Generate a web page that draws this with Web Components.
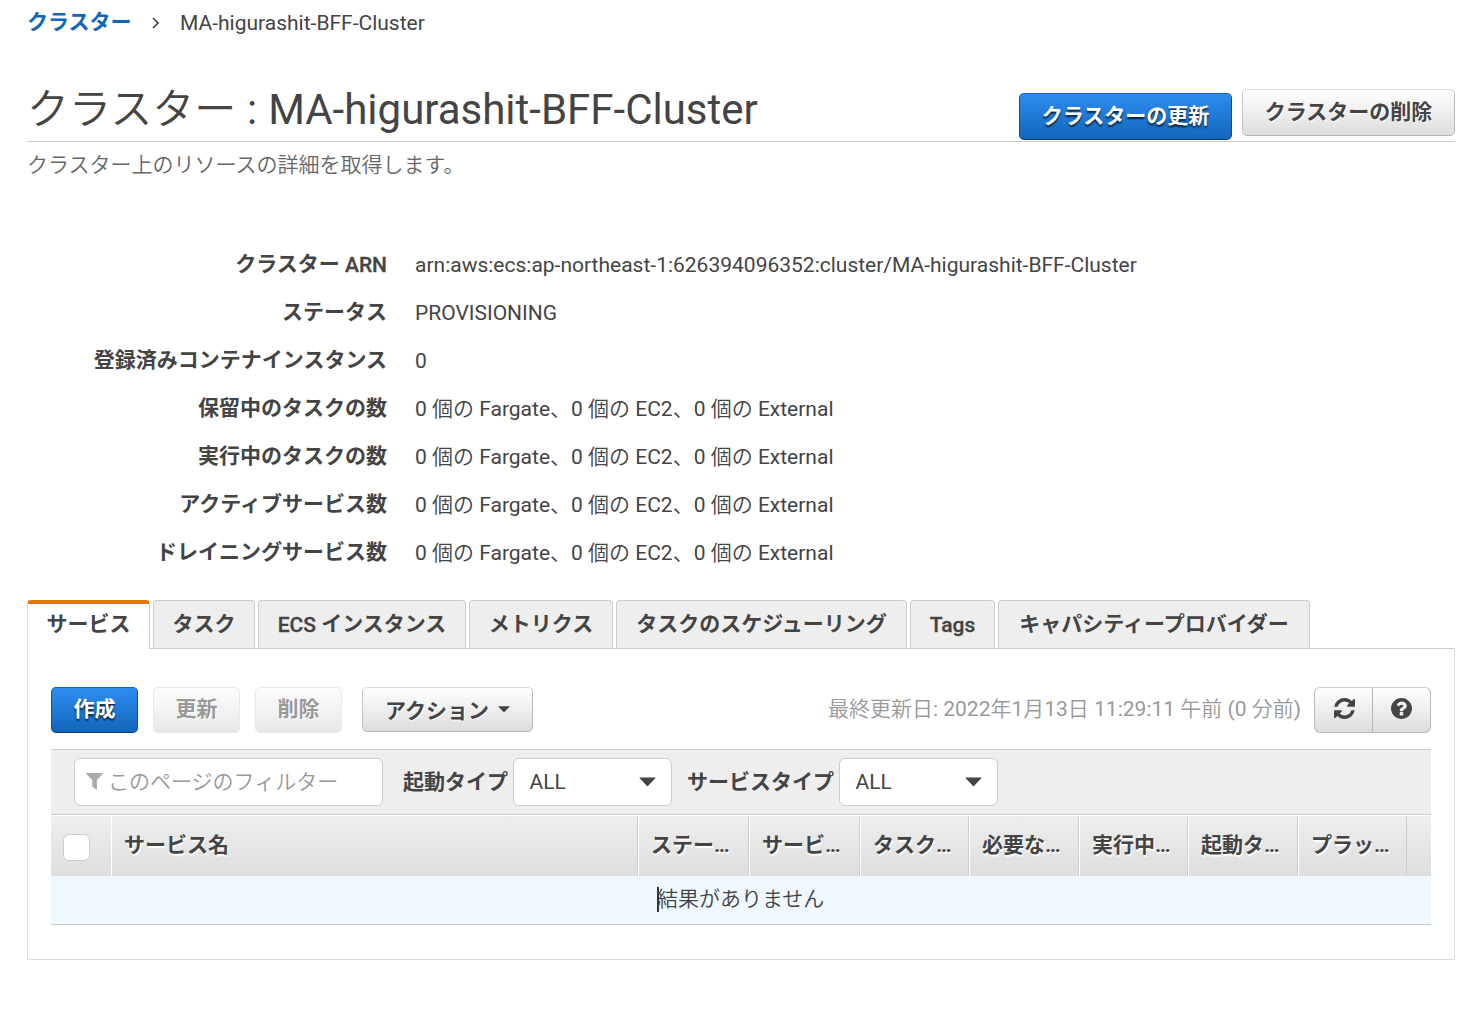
<!DOCTYPE html>
<html lang="ja">
<head>
<meta charset="utf-8">
<title>MA-higurashit-BFF-Cluster</title>
<style>
body{margin:0;background:#fff;color:#444;--strong:Roboto,"Noto Sans CJK JP",sans-serif;font:21px/24px Roboto,"Noto Sans CJK JP DemiLight","Noto Sans CJK JP Light","Noto Sans CJK JP",sans-serif;}
</style>
</head>
<body>
<cluster-page></cluster-page>
<script>
const define = (name, css, html) => customElements.define(name, class extends HTMLElement {
  constructor() {
    super();
    const t = document.createElement('template');
    t.innerHTML = `<style>*{box-sizing:border-box}b{font-family:var(--strong)}:host{box-sizing:border-box}${css}</style>${typeof html === 'function' ? html(this) : html}`;
    this.attachShadow({ mode: 'open' }).append(t.content.cloneNode(true));
  }
});
const latin = s => s.replace(/[A-Za-z]+/g, m => `<span style="font-weight:500;vertical-align:-1px;line-height:1;-webkit-text-stroke:.3px">${m}</span>`);

define('ui-crumbs', `
  :host{display:flex;align-items:center;height:24px}
  .sep{width:9px;height:12px;margin:0 20px}
  b{color:#16b;width:104px;white-space:nowrap;margin-bottom:2px}`,
  `<b><slot name="parent"></slot></b>
   <svg class="sep" viewBox="0 0 9 12"><path d="M2 1 7 6l-5 5" fill="none" stroke="#444" stroke-width="1.7"/></svg>
   <span><slot></slot></span>`);

define('ui-button', `
  :host{display:flex;flex:none;align-items:center;justify-content:center;height:46px;width:87px;padding-bottom:2px;border:1px solid #bbb;border-color:#ddd #bbb #b5b5b5 #c4c4c4;border-radius:5px;
    background:linear-gradient(#fff,#ddd);font-family:var(--strong);font-weight:700;text-shadow:1px 1px 1px #fff;white-space:nowrap}
  :host([kind=primary]){color:#fff;border-color:#16b #0f4f93 #0a3d74 #0f4f93;background:linear-gradient(#2e8df0,#1166bb);text-shadow:0 2px 2px rgba(0,0,0,.75)}
  :host([disabled]){color:#999;border-color:#e9e9e9;background:linear-gradient(#fdfdfd,#e8e8e8)}`,
  `<slot></slot>`);

define('page-heading', `
  :host{display:flex;justify-content:space-between;height:62px;border-bottom:1px solid #ccc}
  h1{margin:0;font-weight:400;font-size:42px;line-height:60px;word-spacing:.5px;white-space:nowrap}
  .actions{display:flex;gap:10px;align-items:flex-start;padding-top:9px}
  ui-button{width:213px;height:47px}
  .update{margin-top:4px}`,
  `<h1><slot></slot></h1>
   <div class="actions"><ui-button kind="primary" class="update">クラスターの更新</ui-button><ui-button>クラスターの削除</ui-button></div>`);

define('detail-row', `
  :host{display:flex;height:48px;line-height:48px;white-space:nowrap}
  b{width:360px;text-align:right;margin-right:28px;line-height:46px}`,
  el => `<b>${latin(el.getAttribute('label'))}</b><span><slot></slot></span>`);

define('ui-tab', `
  :host{display:flex;flex:none;justify-content:center;height:48px;line-height:47px;border:1px solid #ccc;border-bottom:0;border-radius:4px 4px 0 0;background:#eee;font-family:var(--strong);font-weight:700;white-space:pre}
  :host([active]){height:49px;margin-bottom:-1px;background:#fff;border-top:4px solid #e07700;line-height:41px;border-left-color:#ddd}`,
  `<slot></slot>`);

define('ui-select', `
  :host{display:flex;align-items:center;justify-content:space-between;width:159px;height:48px;padding:0 15px 0 15.5px;background:#fff;border:1px solid #ccc;border-radius:6px}
  svg{width:17px;height:10px}`,
  `<slot></slot><svg viewBox="0 0 17 10"><path d="M0 .5h17L8.500 9.500z" fill="#444"/></svg>`);

define('filter-bar', `
  :host{display:flex;align-items:center;height:66px;background:#eee;border-top:1px solid #ccc;border-bottom:1px solid #ccc;padding-left:23px}
  .input{display:flex;align-items:center;width:309px;height:48px;border:1px solid #ccc;border-radius:6px;background:#fff;color:#999;padding-left:11px;margin-right:20px}
  .input svg{width:17px;height:17px;margin:-2px 5px 0 0}
  b{white-space:nowrap}
  .a{width:110px}.b{width:152px;margin-left:15px}`,
  `<div class="input"><svg viewBox="0 0 17 17"><path d="M.2 0h16.600l-.3 1.300-5.600 5.800V17l-4.700-3.600V7.100L.5 1.300z" fill="#aaa"/></svg><span>このページのフィルター</span></div>
   <b class="a">起動タイプ</b><ui-select>ALL</ui-select>
   <b class="b">サービスタイプ</b><ui-select>ALL</ui-select>`);

define('head-cell', `
  :host{display:flex;align-items:center;flex:none;height:60px;border-left:1px solid #fff;border-right:1px solid #ccc;padding:0 0 2px 12px;font-family:var(--strong);font-weight:700;text-shadow:1px 2px 1px #fff;white-space:nowrap}
  :host(.check),:host(.end){border:0}
  ::slotted(i){width:27px;height:27px;border:1px solid #ccc;border-radius:6px;background:#fff}`,
  `<slot></slot>`);

define('service-table', `
  :host{display:block}
  i{box-sizing:border-box;width:27px;height:27px;border:1px solid #ccc;border-radius:6px;background:#fff;margin-top:4px}
  .head{display:flex;height:61px;border-top:1px solid #fff;background:linear-gradient(#eee,#dedede)}
  .empty{display:flex;align-items:center;height:49px;background:#f0f8ff;border-bottom:1px solid #ccc;padding:0 0 2px 606px}
  .caret{width:2px;height:25px;background:#333;margin-right:-2px}`,
  () => {
    const cols = [['ステー…',111],['サービ…',111],['タスク…',109],['必要な…',110],['実行中…',109],['起動タ…',110],['プラッ…',109]];
    return `<filter-bar></filter-bar><div class="head"><head-cell class="check" style="width:60px"><i></i></head-cell>
      <head-cell style="width:527px">サービス名</head-cell>
      ${cols.map(([t,w]) => `<head-cell style="width:${w}px">${t}</head-cell>`).join('')}
      <head-cell class="end" style="width:24px"></head-cell></div>
      <div class="empty"><span class="caret"></span><span>結果がありません</span></div>`;
  });

define('icon-group', `
  :host{display:flex;width:117px;height:46px;border:1px solid #bbb;border-top-color:#ccc;border-radius:6px;background:linear-gradient(#fff,#ddd)}
  span{flex:none;width:57px;display:flex;align-items:center;justify-content:center;padding:0 0 3px 1px}
  span+span{width:58px;border-left:1px solid #b5b5b5;padding-left:0}
  svg{width:21px;height:21px}`,
  `<span><svg viewBox="0 0 1536 1536"><path fill="#444" d="M1511 928q0 5-1 7-64 268-268 434.500T764 1536q-146 0-282.500-55T238 1324l-129 129q-19 19-45 19t-45-19-19-45V960q0-26 19-45t45-19h448q26 0 45 19t19 45-19 45l-137 137q71 66 161 102t187 36q134 0 250-65t186-179q11-17 53-117 8-23 30-23h192q13 0 22.500 9.500t9.500 22.500zm25-800v448q0 26-19 45t-45 19h-448q-26 0-45-19t-19-45 19-45l138-138Q969 256 768 256q-134 0-250 65T332 500q-11 17-53 117-8 23-30 23H50q-13 0-22.500-9.500T18 608v-7q65-268 270-434.500T768 0q146 0 284 55.500T1297 212l130-129q19-19 45-19t45 19 19 45z"/></svg></span>
   <span><svg viewBox="0 0 1536 1536"><path fill="#444" d="M896 1248v-192q0-14-9-23t-23-9H672q-14 0-23 9t-9 23v192q0 14 9 23t23 9h192q14 0 23-9t9-23zm256-672q0-88-55.500-163T958 297t-170-41q-243 0-371 213-15 24 8 42l132 100q7 6 19 6 16 0 25-12 53-68 86-92 34-24 86-24 48 0 85.500 26t37.500 59q0 38-20 61t-68 45q-63 28-115.500 86.500T640 892v36q0 14 9 23t23 9h192q14 0 23-9t9-23q0-19 21.500-49.500T972 829q32-18 49-28.500t46-35 44.500-48 28-60.500 12.500-81zm384 192q0 209-103 385.500T1153.500 1433 768 1536t-385.500-103T103 1153.500 0 768t103-385.500T382.500 103 768 0t385.500 103T1433 382.500 1536 768z"/></svg></span>`);

define('tool-bar', `
  :host{display:flex;align-items:flex-start;height:62px}
  ui-button+ui-button{margin-left:15px}
  ui-button.menu{width:171px;height:45px;margin-left:20px;padding:2px 0 0}
  .menu svg{width:12px;height:7px;margin:-3px 0 0 9px}
  .time{margin-left:auto;color:#999;line-height:45px;margin-right:13px;white-space:nowrap}`,
  `<ui-button kind="primary">作成</ui-button><ui-button disabled>更新</ui-button><ui-button disabled>削除</ui-button>
   <ui-button class="menu">アクション<svg viewBox="0 0 12 7"><path d="M0 .3h12L6 6.500z" fill="#444"/></svg></ui-button>
   <span class="time">最終更新日: 2022年1月13日 11:29:11 午前 (0 分前)</span><icon-group></icon-group>`);

define('cluster-page', `
  :host{display:block;padding:11px 22px 0 27px;height:1015px}
  page-heading{margin-top:45px}
  .sub{color:#666;line-height:24px;margin-top:11px}
  .details{margin-top:64px}
  .tabs{display:flex;gap:3px;margin-top:23px}
  .panel{height:312px;border:1px solid #ddd;border-top-color:#ccc;padding:38px 23px 0}`,
  () => {
    const f = '0 個の Fargate、0 個の EC2、0 個の External';
    const rows = [['クラスター ARN','arn:aws:ecs:ap-northeast-1:626394096352:cluster/MA-higurashit-BFF-Cluster'],['ステータス','PROVISIONING'],['登録済みコンテナインスタンス','0'],['保留中のタスクの数',f],['実行中のタスクの数',f],['アクティブサービス数',f],['ドレイニングサービス数',f]];
    const tabs = [['サービス',123],['タスク',102],['ECS インスタンス',208],['メトリクス',144],['タスクのスケジューリング',291],['Tags',85],['キャパシティープロバイダー',312]];
    return `<ui-crumbs><span slot="parent">クラスター</span>MA-higurashit-BFF-Cluster</ui-crumbs>
      <page-heading>クラスター : MA-higurashit-BFF-Cluster</page-heading>
      <div class="sub">クラスター上のリソースの詳細を取得します。</div>
      <div class="details">${rows.map(([l,v]) => `<detail-row label="${l}">${v}</detail-row>`).join('')}</div>
      <div class="tabs">${tabs.map(([t,w],i) => `<ui-tab ${i ? '' : 'active'} style="width:${w}px"><span>${latin(t)}</span></ui-tab>`).join('')}</div>
      <div class="panel"><tool-bar></tool-bar><service-table></service-table></div>`;
  });
</script>
</body>
</html>
